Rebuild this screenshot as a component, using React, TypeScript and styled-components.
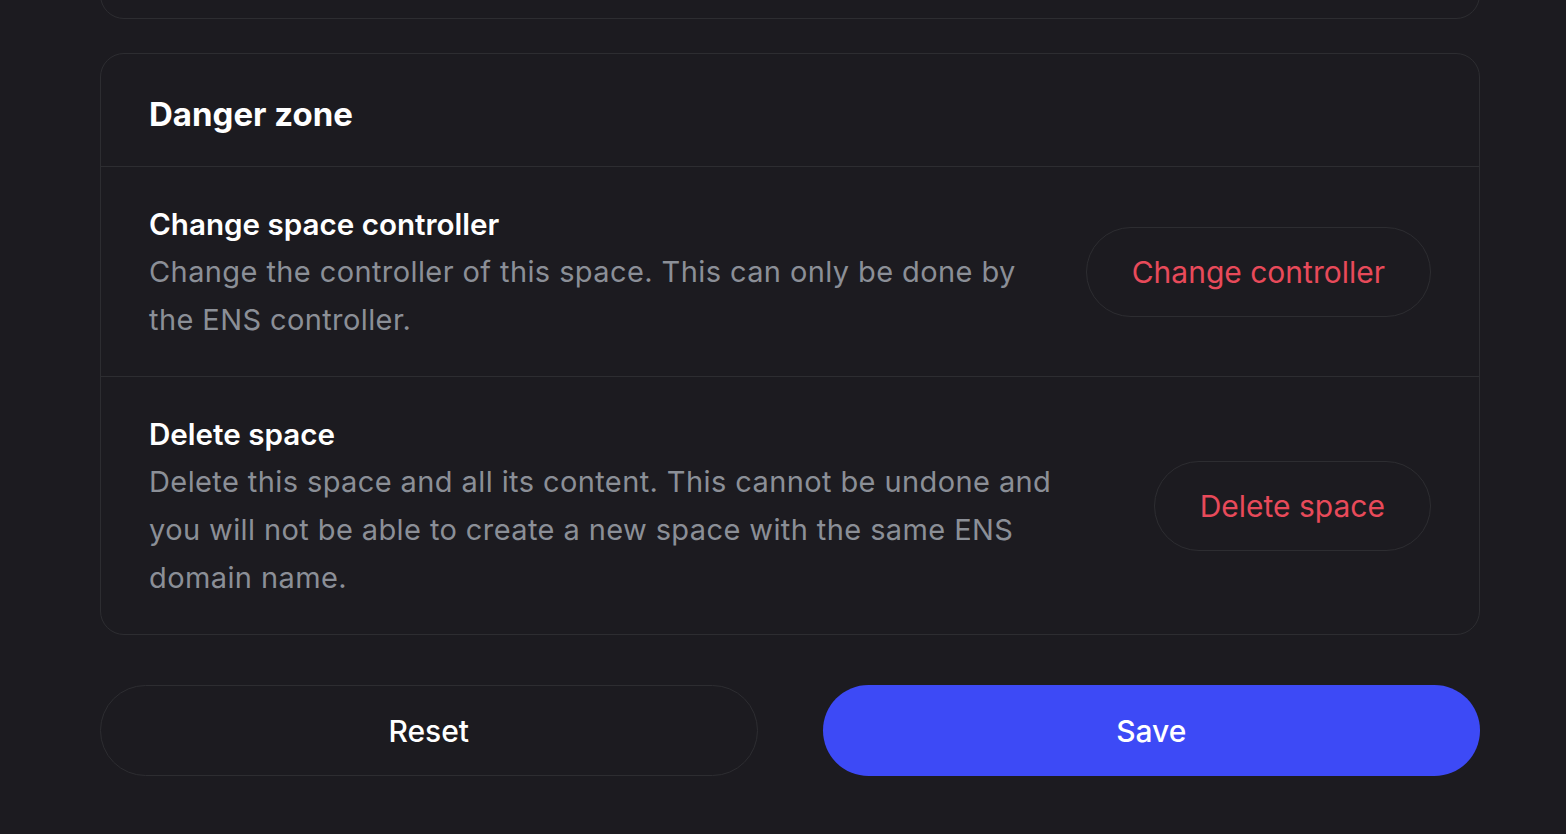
import React from "react";
import styled, { createGlobalStyle } from "styled-components";

const Global = createGlobalStyle`
  html, body {
    margin: 0;
    padding: 0;
    background: #1c1b20;
    font-family: Inter, "Noto Sans", sans-serif;
    -webkit-font-smoothing: antialiased;
  }
  * { box-sizing: border-box; }
`;

const Page = styled.div`
  width: 1566px;
  height: 834px;
  overflow: hidden;
  background: #1c1b20;
  padding: 0 86px 0 100px;
  display: flex;
  flex-direction: column;
`;

const PrevCard = styled.div`
  height: 60px;
  margin-top: -41px;
  border: 1px solid #2d2d31;
  border-radius: 24px;
  flex: none;
`;

const Card = styled.section`
  margin-top: 34px;
  border: 1px solid #2d2d31;
  border-radius: 24px;
  flex: none;
`;

const CardHeader = styled.div`
  padding: 36px 48px 28px;
  border-bottom: 1px solid #2d2d31;
`;

const CardTitle = styled.h2`
  margin: 0;
  font-size: 33px;
  line-height: 48px;
  font-weight: 700;
  color: #ffffff;
`;

const Row = styled.div<{ $last?: boolean }>`
  display: flex;
  align-items: center;
  gap: 56px;
  padding: 33px 48px 32px;
  border-bottom: ${(p) => (p.$last ? "none" : "1px solid #2d2d31")};
`;

const RowText = styled.div`
  flex: 1;
  min-width: 0;
`;

const RowTitle = styled.div`
  font-size: 29.6px;
  line-height: 48px;
  font-weight: 600;
  color: #ffffff;
`;

const RowDesc = styled.div`
  font-size: 29px;
  letter-spacing: 0.4px;
  line-height: 48px;
  color: #8b8f97;
`;

const OutlineButton = styled.button<{ $danger?: boolean }>`
  flex: none;
  height: 90px;
  padding: 0 45px;
  border-radius: 45px;
  border: 1px solid #2d2d31;
  background: transparent;
  color: ${(p) => (p.$danger ? "#e84a5a" : "#ffffff")};
  font-family: inherit;
  font-size: 30px;
  font-weight: 400;
  cursor: pointer;
`;

const Actions = styled.div`
  margin-top: 50px;
  display: grid;
  grid-template-columns: 1fr 1fr;
  gap: 65px;
`;

const PrimaryButton = styled.button`
  height: 91px;
  border-radius: 46px;
  border: none;
  background: #3d4af6;
  color: #ffffff;
  font-family: inherit;
  font-size: 30px;
  font-weight: 500;
  cursor: pointer;
`;

const WideButton = styled(OutlineButton)`
  width: 100%;
  height: 91px;
  border-radius: 46px;
  font-weight: 500;
`;

export default function App() {
  return (
    <>
      <Global />
      <Page>
        <PrevCard />
        <Card>
          <CardHeader>
            <CardTitle>Danger zone</CardTitle>
          </CardHeader>
          <Row>
            <RowText>
              <RowTitle>Change space controller</RowTitle>
              <RowDesc>
                Change the controller of this space. This can only be done by the ENS controller.
              </RowDesc>
            </RowText>
            <OutlineButton $danger>Change controller</OutlineButton>
          </Row>
          <Row $last>
            <RowText>
              <RowTitle>Delete space</RowTitle>
              <RowDesc>
                Delete this space and all its content. This cannot be undone and you will not be able to create a new space with the same ENS domain name.
              </RowDesc>
            </RowText>
            <OutlineButton $danger>Delete space</OutlineButton>
          </Row>
        </Card>
        <Actions>
          <WideButton>Reset</WideButton>
          <PrimaryButton>Save</PrimaryButton>
        </Actions>
      </Page>
    </>
  );
}
